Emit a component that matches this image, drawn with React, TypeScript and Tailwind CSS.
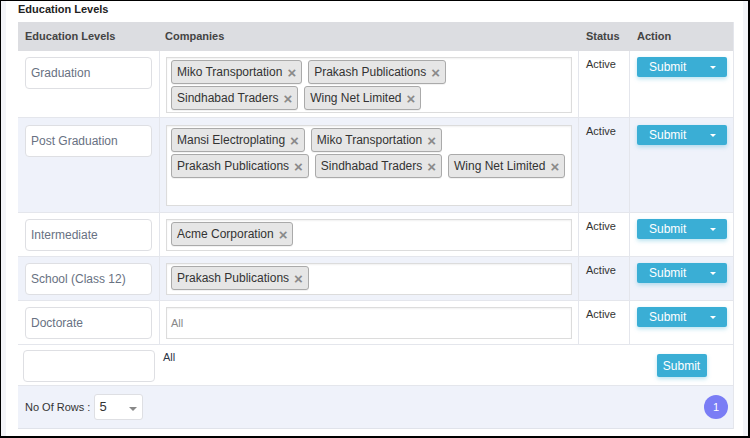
import React from "react";

type Row = { level: string; companies: string[]; alt: boolean; h: string; pt: string; boxH: string };

const rows: Row[] = [
  { level: "Graduation", companies: ["Miko Transportation", "Prakash Publications", "Sindhabad Traders", "Wing Net Limited"], alt: false, h: "h-[67px]", pt: "pt-[6px]", boxH: "h-[56px]" },
  { level: "Post Graduation", companies: ["Mansi Electroplating", "Miko Transportation", "Prakash Publications", "Sindhabad Traders", "Wing Net Limited"], alt: true, h: "h-[95px]", pt: "pt-[7px]", boxH: "h-[81px]" },
  { level: "Intermediate", companies: ["Acme Corporation"], alt: false, h: "h-[44px]", pt: "pt-[6px]", boxH: "h-[32px]" },
  { level: "School (Class 12)", companies: ["Prakash Publications"], alt: true, h: "h-[44px]", pt: "pt-[6px]", boxH: "h-[32px]" },
  { level: "Doctorate", companies: [], alt: false, h: "h-[44px]", pt: "pt-[6px]", boxH: "h-[32px]" },
];

function Chip({ name }: { name: string }) {
  return (
    <div className="flex items-center h-[24px] pl-[5px] pr-[5px] bg-[#e6e6e6] border border-[#aaaaaa] rounded-[3px] text-[12px] text-[#333] leading-[22px] shadow-[0_1px_0_rgba(0,0,0,0.05)]">
      <span>{name}</span>
      <span className="ml-[5px] text-[15px] font-bold text-[#8a8a8a] leading-none">×</span>
    </div>
  );
}

function SubmitDropdown() {
  return (
    <div className="flex items-center justify-between h-[20px] pl-[12px] pr-[11px] bg-[#3aaed5] rounded-[2px] shadow-[0_2px_4px_rgba(58,174,213,0.35)] text-white text-[12px] leading-[20px]">
      <span>Submit</span>
      <span className="w-0 h-0 border-l-[3px] border-r-[3px] border-t-[3px] border-l-transparent border-r-transparent border-t-white"></span>
    </div>
  );
}

export default function App() {
  return (
    <div className="w-[750px] h-[438px] box-border overflow-hidden border-t border-l border-r-2 border-b-2 border-black bg-[#f3f4f8] px-[5px] font-['Liberation_Sans',Arial,sans-serif]">
      <div className="h-full bg-white pl-[12px] pr-[9px]">
        <div className="h-[21px] pt-[2px] text-[11px] font-bold text-[#222] leading-[13px]">Education Levels</div>
        <div className="border-r border-[#e4e6ec]">
          <div className="grid grid-cols-[142px_419px_51px_1fr] h-[29px] items-center bg-[#dcdde1] text-[11px] font-bold text-[#444]">
            <div className="pl-[7px]">Education Levels</div>
            <div className="pl-[5px]">Companies</div>
            <div className="pl-[7px]">Status</div>
            <div className="pl-[7px]">Action</div>
          </div>
          {rows.map((r) => (
            <div key={r.level} className={`grid grid-cols-[142px_419px_51px_1fr] ${r.h} border-b border-[#e4e6ec] ${r.alt ? "bg-[#eff2fa]" : "bg-white"}`}>
              <div className={`border-r border-[#e4e6ec] px-[7px] ${r.pt}`}>
                <div className="h-[32px] bg-white border border-[#dedfe3] rounded-[4px] flex items-center pl-[5px] text-[12px] text-[#687182]">{r.level}</div>
              </div>
              <div className={`border-r border-[#e4e6ec] px-[6px] ${r.pt}`}>
                <div className={`${r.boxH} bg-white border border-[#dcdcdc] shadow-[inset_0_1px_2px_rgba(0,0,0,0.06)] pt-[2px] pl-[4px] pr-[4px]`}>
                  {r.companies.length > 0 ? (
                    <div className="flex flex-wrap gap-x-[6px] gap-y-[2px]">
                      {r.companies.map((c) => (
                        <Chip key={c} name={c} />
                      ))}
                    </div>
                  ) : (
                    <div className="h-[27px] flex items-center text-[11px] text-[#888]">All</div>
                  )}
                </div>
              </div>
              <div className={`border-r border-[#e4e6ec] pl-[7px] ${r.pt} pt-[7px] text-[11px] text-[#333] leading-[13px]`}>Active</div>
              <div className={`pl-[7px] pr-[6px] ${r.pt}`}>
                <SubmitDropdown />
              </div>
            </div>
          ))}
          <div className="grid grid-cols-[142px_419px_51px_1fr] h-[41px] border-b border-[#e4e6ec] bg-white">
            <div className="px-[5px] pt-[5px]">
              <div className="h-[32px] bg-white border border-[#dedfe3] rounded-[4px]"></div>
            </div>
            <div className="pl-[3px] pt-[6px] text-[11px] text-[#2d3748] leading-[13px]">All</div>
            <div></div>
            <div className="flex justify-center pt-[9px]">
              <div className="h-[23px] w-[50px] flex items-center justify-center bg-[#3aaed5] rounded-[2px] shadow-[0_2px_4px_rgba(58,174,213,0.35)] text-white text-[12px]">Submit</div>
            </div>
          </div>
          <div className="h-[43px] bg-[#eff2fa] border-b border-[#e0e3ea] flex items-center justify-between pl-[7px] pr-[5px]">
            <div className="flex items-center">
              <span className="text-[11px] text-[#333]">No Of Rows :</span>
              <div className="ml-[4px] w-[49px] h-[26px] bg-white border border-[#dedfe3] rounded-[3px] flex items-center justify-between pl-[4px] pr-[5px]">
                <span className="text-[13px] text-[#333]">5</span>
                <span className="mt-[4px] w-0 h-0 border-l-[4px] border-r-[4px] border-t-[4px] border-l-transparent border-r-transparent border-t-[#888]"></span>
              </div>
            </div>
            <div className="w-[24px] h-[24px] rounded-full bg-[#7a7df5] flex items-center justify-center text-white text-[11px]">1</div>
          </div>
        </div>
      </div>
    </div>
  );
}
